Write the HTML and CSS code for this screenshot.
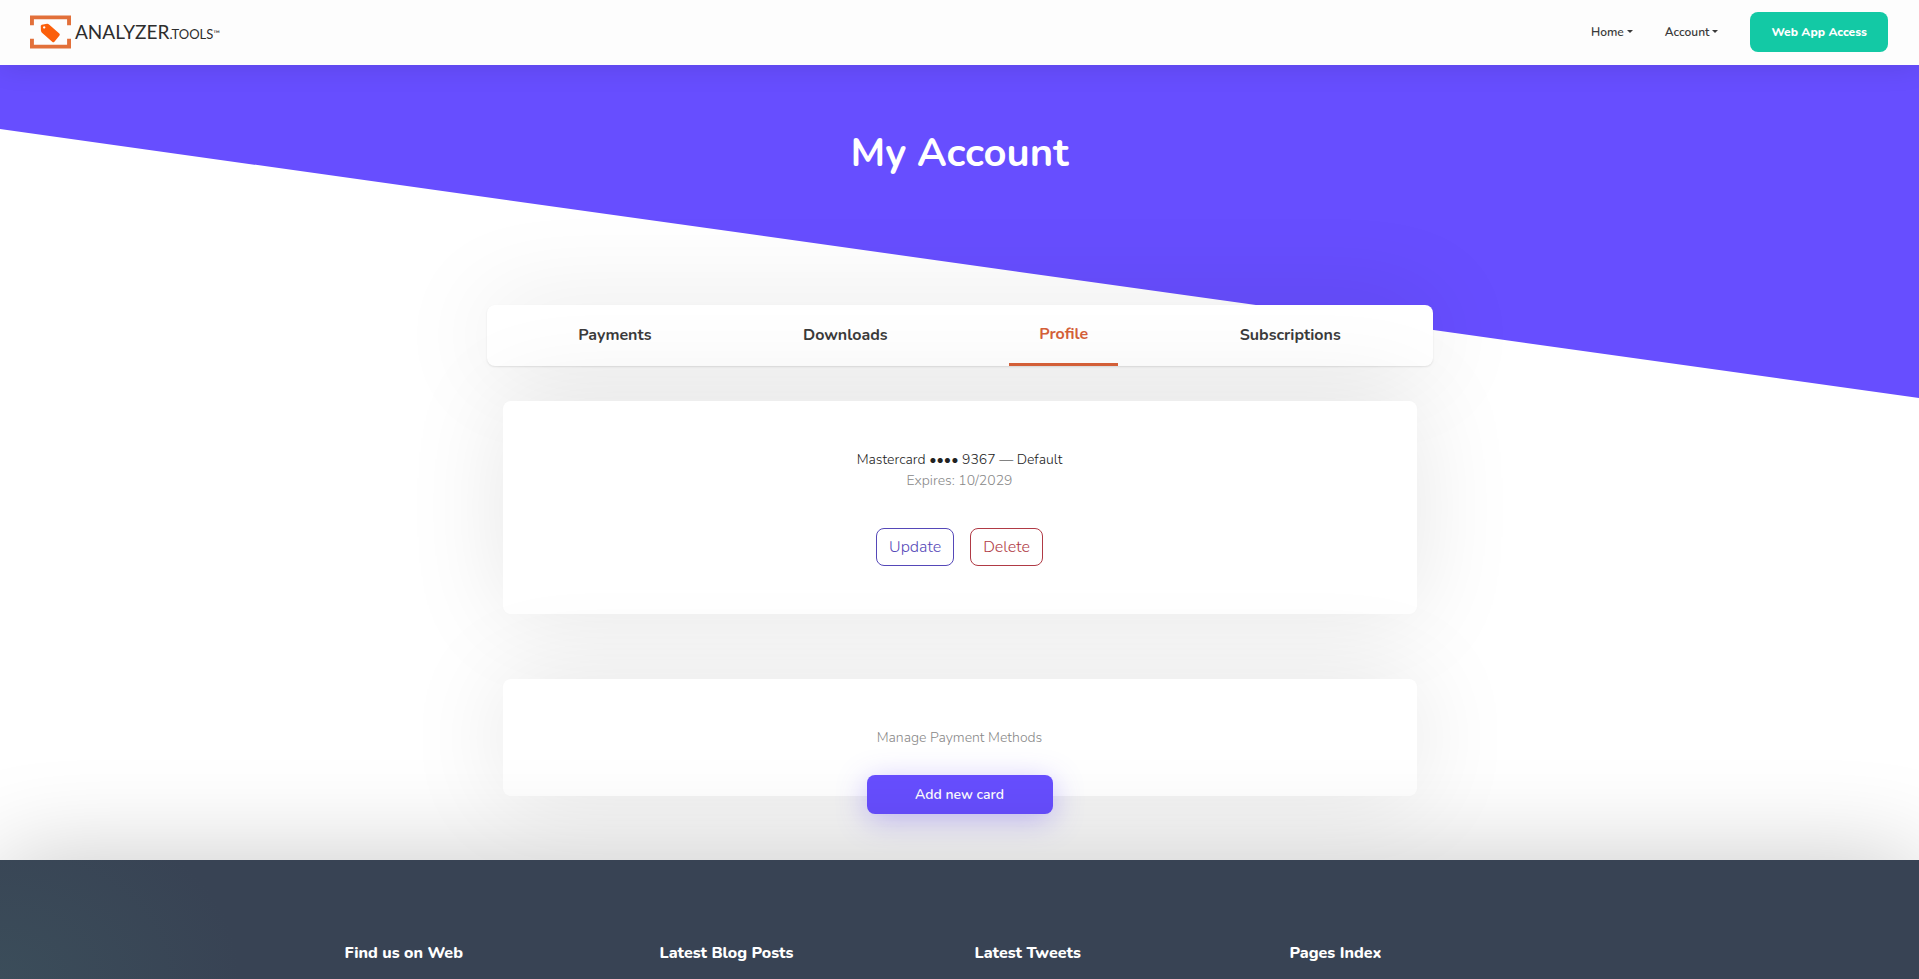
FILE: index.html
```
<!DOCTYPE html>
<html lang="en">
<head>
  <meta charset="UTF-8" />
  <meta name="viewport" content="width=device-width, initial-scale=1.0"/>
  <title>My Account - Analyzer.Tools</title>
  <link rel="stylesheet" href="styles.css">
</head>
<body>

<header class="topbar">
  <a class="logo" href="#" aria-label="Analyzer.Tools">
    <svg class="logo-mark" viewBox="0 0 42 34" aria-hidden="true">
      <path d="M2 10V2h38v8M2 24v8h38v-8" fill="none" stroke="#e2703a" stroke-width="4"/>
      <path fill="#fb5f0b" fill-rule="evenodd" d="M11 10.500L12 9.500L17.500 8.500Q18.500 8.400 19.500 9.200L30 18.500Q31 19.500 30.200 20.600L25 27Q24 28 23 27.200L12 17.500Q11.300 16.800 11.200 15.500zM14.500 11a1.200 1.200 0 1 0 .1 0z"/>
    </svg>
    <span class="logo-text">ANALYZER<span class="logo-sub">.TOOLS</span><span class="logo-tm">™</span></span>
  </a>
  <nav class="menu">
    <a class="menu-link" href="#">Home</a>
    <a class="menu-link" href="#">Account</a>
    <a class="btn-access" href="#">Web App Access</a>
  </nav>
</header>

<section class="hero">
  <h1>My Account</h1>
</section>

<main class="account">
  <nav class="tabs">
    <a class="tab" href="#">Payments</a>
    <a class="tab" href="#">Downloads</a>
    <a class="tab active" href="#">Profile</a>
    <a class="tab" href="#">Subscriptions</a>
  </nav>

  <section class="card">
    <p class="card-name">Mastercard •••• 9367 — Default</p>
    <p class="muted">Expires: 10/2029</p>
    <div class="actions">
      <button type="button" class="btn-outline update">Update</button>
      <button type="button" class="btn-outline delete">Delete</button>
    </div>
  </section>

  <section class="card manage">
    <p class="muted">Manage Payment Methods</p>
    <button type="button" class="btn-add">Add new card</button>
  </section>
</main>

<footer class="footer">
  <div class="footer-cols">
    <h2>Find us on Web</h2>
    <h2>Latest Blog Posts</h2>
    <h2>Latest Tweets</h2>
    <h2>Pages Index</h2>
  </div>
</footer>

</body>
</html>
```
FILE: styles.css
```
:root {
  --purple: #674eff;
  --green: #13c9a5;
  --orange: #d35f38;
  --dark: #384354;
  --text: #3a3a3a;
}
* {
  box-sizing: border-box;
}
body {
  margin: 0;
  font-family: Nunito, Lato, sans-serif;
  font-size: 14px;
  color: var(--text);
  background: #fff;
  min-height: 100vh;
  display: flex;
  flex-direction: column;
  overflow-x: hidden;
}
a {
  color: inherit;
  text-decoration: none;
}
h1, h2, p {
  margin: 0;
}

/* header */
.topbar {
  position: relative;
  z-index: 2;
  display: flex;
  align-items: center;
  justify-content: space-between;
  height: 65px;
  padding: 0 31px 2px 30px;
  background: #fdfdfd;
  box-shadow: 0 0 30px rgba(0,0,0,0.12);
}
.logo {
  display: flex;
  align-items: center;
  gap: 4px;
  color: #2d2d2d;
}
.logo-mark {
  width: 41px;
  height: 34px;
}
.logo-text {
  font-family: Lato, sans-serif;
  font-size: 19px;
}
.logo-sub {
  font-size: 13px;
}
.logo-tm {
  font-size: 9px;
  vertical-align: 2px;
}
.menu {
  display: flex;
  align-items: center;
  gap: 32px;
  font-size: 12px;
  font-weight: 600;
}
.menu-link::after {
  content: "";
  display: inline-block;
  margin-left: 3px;
  vertical-align: 3px;
  border: 3px solid transparent;
  border-top-color: currentColor;
  border-bottom: 0;
}
.btn-access {
  padding: 0 21px;
  line-height: 40px;
  border-radius: 8px;
  background: var(--green);
  color: #fff;
  font-weight: 800;
}

/* slanted banner */
.hero {
  height: 333px;
  padding-top: 62px;
  background: var(--purple);
  clip-path: polygon(0 0, 100% 0, 100% 100%, 0 64px);
  color: #fff;
  text-align: center;
}
h1 {
  font-size: 40px;
  line-height: 52px;
  font-weight: 700;
}

/* account */
.account {
  position: relative;
  width: 100%;
  max-width: 946px;
  margin: -93px auto 0;
  padding-bottom: 64px;
}
.tabs {
  display: flex;
  justify-content: space-around;
  padding: 0 16px;
  background: #fff;
  border-radius: 8px;
  box-shadow: 0 0 100px rgba(0,0,0,0.1), 0 1px 2px rgba(0,0,0,0.1);
}
.tab {
  padding: 0 30px;
  line-height: 60px;
  font-size: 16px;
  font-weight: 700;
}
.tab.active {
  line-height: 58px;
  color: var(--orange);
  border-bottom: 3px solid var(--orange);
}
.card {
  display: flow-root;
  margin: 35px 16px 0;
  padding: 48px 20px;
  border-radius: 8px;
  background: #fff;
  box-shadow: 0 0 100px rgba(0,0,0,0.1);
  text-align: center;
  line-height: 21px;
  font-weight: 300;
}
.card-name {
  color: #222;
}
.muted {
  color: #888;
}
.actions {
  display: flex;
  justify-content: center;
  gap: 16px;
  margin-top: 37px;
}
.btn-outline {
  height: 38px;
  padding: 0 12px;
  border: 1px solid;
  border-radius: 8px;
  background: none;
  font-family: inherit;
  font-size: 16px;
  font-weight: 300;
  cursor: pointer;
}
.update {
  color: #5548b8;
}
.delete {
  color: #b03a45;
}
.manage {
  margin-top: 65px;
  padding-bottom: 0;
}
/* hangs over the bottom edge of its card */
.btn-add {
  display: block;
  width: 186px;
  height: 39px;
  margin: 27px auto -18px;
  border: none;
  border-radius: 8px;
  background: var(--purple);
  box-shadow: 0 6px 30px rgba(103,78,255,0.35);
  color: #fff;
  font-family: inherit;
  font-size: 14px;
  font-weight: 600;
  cursor: pointer;
}

/* footer */
.footer {
  position: relative;
  flex: 1;
  padding: 81px 0 14px;
  background: radial-gradient(ellipse 240px 180px at 0 100%, #3b4d5a, var(--dark));
  box-shadow: 0 0 100px rgba(0,0,0,0.22);
  color: #fff;
}
.footer-cols {
  display: grid;
  grid-template-columns: repeat(4, 1fr);
  max-width: 1260px;
  margin: 0 auto;
}
h2 {
  padding: 0 15px;
  font-size: 16px;
  line-height: 24px;
  font-weight: 800;
}
```
